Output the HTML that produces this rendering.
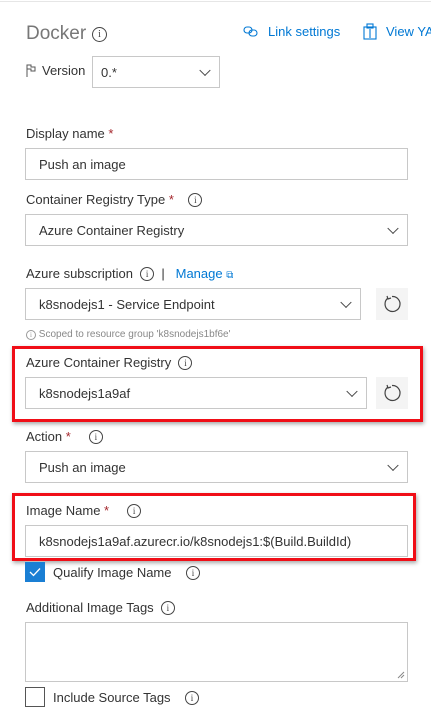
<!DOCTYPE html>
<html><head><style>
*{box-sizing:border-box;margin:0;padding:0}
body{width:431px;height:716px;background:#fff;font-family:"Liberation Sans",sans-serif;font-size:13px;color:#333;position:relative;overflow:hidden}
.a{position:absolute}
.lbl{position:absolute;left:26px;font-size:13px;color:#333;white-space:nowrap;line-height:16px}
.req{color:#a4262c}
.box{position:absolute;border:1px solid #c8c8c8;background:#fff;padding-left:13px;font-size:13px;display:flex;align-items:center;white-space:nowrap}
.chev{position:absolute;right:10px;top:50%;width:8px;height:8px;border-right:1.3px solid #444;border-bottom:1.3px solid #444;transform:translateY(-70%) rotate(45deg)}
.info{display:inline-block;width:14px;height:14px;border:1.2px solid #444;border-radius:50%;font-size:9px;line-height:12px;text-align:center;vertical-align:top;margin-top:1px;font-family:"Liberation Serif",serif;color:#444}
.ref{position:absolute;background:#f4f4f4;width:32px;height:32px}
.red{position:absolute;border:3px solid #f00e17;box-shadow:1px 2px 4px rgba(0,0,0,.35)}
</style></head><body>
<div class="a" style="left:0;top:1px;width:431px;height:1px;background:#e6e6e6"></div>
<div class="a" style="left:26px;top:23px;font-size:19px;color:#777">Docker</div>
<div class="a" style="left:92px;top:27px"><span class="info" style="width:15px;height:15px;line-height:13px;font-size:10px;margin:0">i</span></div>
<svg class="a" style="left:243px;top:25px" width="16" height="14" viewBox="0 0 16 14"><g fill="none" stroke="#0078d4" stroke-width="1.1"><rect x="1" y="2" width="8" height="6" rx="3"/><rect x="6" y="5" width="8" height="6" rx="3"/></g></svg>
<div class="a" style="left:268px;top:24px;color:#0078d4;font-size:13px">Link settings</div>
<svg class="a" style="left:363px;top:23px" width="15" height="17" viewBox="0 0 15 17"><g fill="none" stroke="#0078d4" stroke-width="1.1"><rect x="1" y="4" width="12" height="12"/><rect x="4" y="1" width="6" height="4"/><line x1="7" y1="6" x2="7" y2="15"/></g></svg>
<div class="a" style="left:386px;top:24px;color:#0078d4;font-size:13px;white-space:nowrap">View YAML</div>

<svg class="a" style="left:26px;top:64px" width="10" height="13" viewBox="0 0 10 13"><g fill="none" stroke="#555" stroke-width="1"><line x1="1" y1="0.5" x2="1" y2="13"/><path d="M1 1H5V3H9V7H5V5H1"/></g></svg>
<div class="a" style="left:42px;top:63px;font-size:13px">Version</div>
<div class="box" style="left:92px;top:56px;width:128px;height:32px;padding-left:8px">0.*<span class="chev"></span></div>

<div class="lbl" style="top:126px">Display name <span class="req">*</span></div>
<div class="box" style="left:25px;top:148px;width:383px;height:32px">Push an image</div>

<div class="lbl" style="top:192px">Container Registry Type <span class="req">*</span> &nbsp;&nbsp;&nbsp;<span class="info">i</span></div>
<div class="box" style="left:25px;top:214px;width:383px;height:32px">Azure Container Registry<span class="chev"></span></div>

<div class="lbl" style="top:266px">Azure subscription &nbsp;<span class="info">i</span> &nbsp;| &nbsp;&nbsp;<span style="color:#0078d4">Manage</span> <span style="color:#0078d4;font-size:10px">⧉</span></div>
<div class="box" style="left:25px;top:288px;width:336px;height:32px">k8snodejs1 - Service Endpoint<span class="chev"></span></div>
<div class="ref" style="left:376px;top:288px"><svg width="32" height="32"><path d="M12 10 A7.5 7.5 0 1 0 16 8.5" fill="none" stroke="#444" stroke-width="1.2"/><path d="M11 8 L12 11 L15 10" fill="none" stroke="#444" stroke-width="1.2"/></svg></div>
<div class="a" style="left:26px;top:329px;font-size:10px;color:#888;white-space:nowrap;line-height:12px"><span class="info" style="width:10px;height:10px;font-size:7px;line-height:8px;border-color:#999;color:#999">i</span> Scoped to resource group 'k8snodejs1bf6e'</div>

<div class="red" style="left:12px;top:346px;width:411px;height:76px"></div>
<div class="lbl" style="top:355px">Azure Container Registry &nbsp;<span class="info">i</span></div>
<div class="box" style="left:25px;top:377px;width:342px;height:32px">k8snodejs1a9af<span class="chev"></span></div>
<div class="ref" style="left:376px;top:377px"><svg width="32" height="32"><path d="M12 10 A7.5 7.5 0 1 0 16 8.5" fill="none" stroke="#444" stroke-width="1.2"/><path d="M11 8 L12 11 L15 10" fill="none" stroke="#444" stroke-width="1.2"/></svg></div>

<div class="lbl" style="top:429px">Action <span class="req">*</span> &nbsp;&nbsp;&nbsp;&nbsp;<span class="info">i</span></div>
<div class="box" style="left:25px;top:451px;width:383px;height:32px">Push an image<span class="chev"></span></div>

<div class="red" style="left:12px;top:493px;width:404px;height:68px"></div>
<div class="lbl" style="top:503px">Image Name <span class="req">*</span> &nbsp;&nbsp;&nbsp;&nbsp;<span class="info">i</span></div>
<div class="box" style="left:25px;top:525px;width:383px;height:32px">k8snodejs1a9af.azurecr.io/k8snodejs1:$(Build.BuildId)</div>

<div class="a" style="left:25px;top:562px;width:20px;height:20px;background:#1a7fd4"><svg width="20" height="20"><path d="M5 10 L8.5 13.5 L15 6.5" fill="none" stroke="#fff" stroke-width="1.3"/></svg></div>
<div class="a" style="left:53px;top:565px;white-space:nowrap;line-height:16px">Qualify Image Name &nbsp;&nbsp;&nbsp;<span class="info">i</span></div>

<div class="lbl" style="top:600px">Additional Image Tags &nbsp;<span class="info">i</span></div>
<div class="box" style="left:25px;top:622px;width:383px;height:60px"></div>
<svg class="a" style="left:397px;top:671px" width="8" height="8"><path d="M1 7L7 1M4 7L7 4" stroke="#888" stroke-width="1"/></svg>

<div class="a" style="left:25px;top:687px;width:20px;height:20px;border:1px solid #555"></div>
<div class="a" style="left:53px;top:690px;white-space:nowrap;line-height:16px">Include Source Tags &nbsp;&nbsp;&nbsp;<span class="info">i</span></div>
</body></html>
